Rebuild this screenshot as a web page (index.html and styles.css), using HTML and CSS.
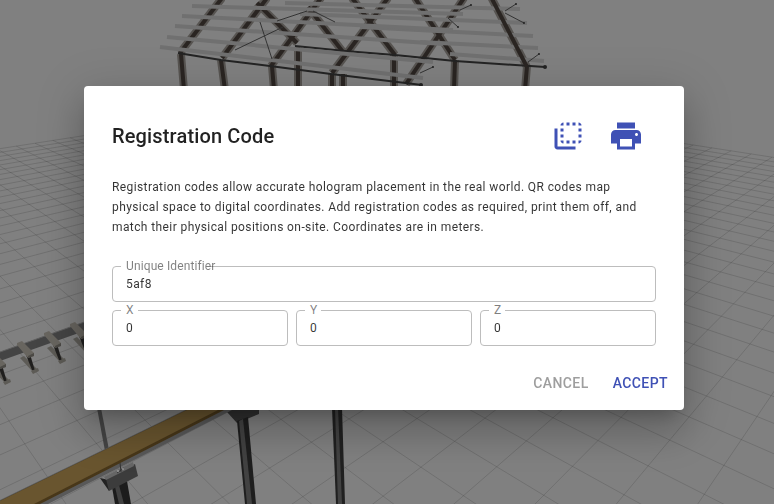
FILE: index.html
```html
<!DOCTYPE html>
<html lang="en">
<head>
<meta charset="utf-8">
<title>Registration Code</title>
<link rel="stylesheet" href="styles.css">
</head>
<body>
<svg class="scene" viewBox="0 0 774 504" preserveAspectRatio="xMidYMid slice" aria-hidden="true">
  <path class="grid" id="grid" d=""/>

  <!-- roof frame -->
  <g class="steel-edge">
    <path d="M181 54L184 90M221 60L225 90M272 66L274 90M298 47V90M332 74V90M343 74V90M394 55V90M455 60L454 90M527 66L525 90"/>
    <path d="M257 3L297 43M308 7L343 52M352 -2L395 55M415 -2L455 60M491 -3L527 67"/>
    <path d="M180 53L222 -2M222 58L267 -2M271 66L321 -2M332 73L388 -2M406 84L464 -2"/>
  </g>
  <g class="steel">
    <path d="M181 54L184 90M221 60L225 90M272 66L274 90M298 47V90M332 74V90M343 74V90M394 55V90M455 60L454 90M527 66L525 90"/>
    <path d="M257 3L297 43M308 7L343 52M352 -2L395 55M415 -2L455 60"/>
    <path d="M180 53L222 -2M222 58L267 -2M271 66L321 -2M332 73L388 -2M406 84L464 -2"/>
  </g>
  <path class="eave" d="M178 53L221 60L270 66L331 74L422 85M295 46L345 51L395 55L455 61L545 67"/>
  <g class="purlin">
    <path d="M285 3L520 9M300 14L527 23M360 27L533 36M420 42L538 48M450 54L544 61"/>
    <path d="M192 6L463 14M182 16L453 30M175 26L443 44M167 37L433 62M160 47L423 78"/>
  </g>
  <path class="steel" d="M491 -3L527 67"/>
  <path class="strut" d="M235 50L283 27M260 22L272 59M277 21L307 11M313 11L335 22M460 10L471 5M448 18L458 27M505 11L516 4M505 13L524 23M528 62L539 54M420 73L433 67"/>
  <g class="knob">
    <circle cx="471" cy="5" r="1"/><circle cx="458" cy="27" r="1"/><circle cx="516" cy="4" r="1"/><circle cx="524" cy="23" r="1"/>
    <circle cx="539" cy="54" r="1"/><circle cx="433" cy="67" r="1"/><circle cx="545" cy="67" r="2"/><circle cx="421" cy="85" r="2"/>
  </g>

  <!-- side rail with brackets -->
  <path fill="#444" d="M0 352L90 320V329L0 361z"/>
  <path class="rail-edge" d="M0 352L90 320"/>
  <defs>
    <g id="bracket">
      <path fill="#5d5b56" d="M20 358L24 356L38 370L34 373z"/>
      <path fill="#201f1e" d="M26 355L30 354L35 371L32 370z"/>
      <path fill="#5d5b56" d="M31 371L38 368L39 371L33 374z"/>
      <path fill="#68655f" d="M17 343L22 341L34 353L34 356L28 358L17 345z"/>
      <path fill="#4b4945" d="M28 356L34 353V356L28 358z"/>
    </g>
  </defs>
  <use href="#bracket" x="-28" y="11"/>
  <use href="#bracket"/>
  <use href="#bracket" x="27" y="-10"/>
  <use href="#bracket" x="53" y="-19"/>

  <!-- timber beam and its supports -->
  <path fill="#454545" d="M97 408H101L109 450L105 451z"/>
  <path fill="#303030" d="M227 412L234 408L259 408V414L237 423z"/>
  <path fill="#1e1e1e" d="M237 421L248 417L256 504H245z"/>
  <path fill="#424242" d="M239 421L243 419L252 504H247z"/>
  <path fill="#202020" d="M332 408H342L345 504H336z"/>
  <path fill="#424242" d="M335 408H338L342 504H338z"/>
  <path fill="#1c1c1c" d="M112 487L127 481L131 504H115z"/>
  <path fill="#414141" d="M115 487L119 485L124 504H119z"/>
  <path fill="#595959" d="M0 500L187 409L234 409L48 504H0z"/>
  <path fill="#483719" d="M0 501L189 409L226 409L40 504H0z"/>
  <path fill="#69552f" d="M0 501L189 409L220 409L34 504H0z"/>
  <path fill="#222" d="M100 478L109 480V491z"/>
  <path fill="#3c3c3c" d="M106 479L135 464L138 476L109 491z"/>
  <path fill="#666" d="M104 477L133 462L134 466L106 480z"/>
  <path class="strut" d="M120 463L121 472M117 473L124 468"/>
  <circle cx="118" cy="471" r="1" fill="#999"/><circle cx="123" cy="469" r="1" fill="#999"/>
</svg>

<main class="backdrop">
  <form class="dialog" role="dialog" aria-labelledby="dialog-title" aria-describedby="dialog-text">
    <header class="dialog-header">
      <h1 class="dialog-title" id="dialog-title">Registration Code</h1>
      <div class="tools">
        <button class="tool" type="button" aria-label="Copy">
          <svg viewBox="0 0 24 24"><path d="M9 7H7v2h2V7zm0 4H7v2h2v-2zm0-8c-1.110 0-2 .9-2 2h2V3zm4 12h-2v2h2v-2zm6-12v2h2c0-1.100-.9-2-2-2zm-6 0h-2v2h2V3zM9 17v-2H7c0 1.100.89 2 2 2zm10-4h2v-2h-2v2zm0-4h2V7h-2v2zm0 8c1.100 0 2-.9 2-2h-2v2zM5 7H3v12c0 1.100.89 2 2 2h12v-2H5V7zm10-2h2V3h-2v2zm0 12h2v-2h-2v2z"/></svg>
        </button>
        <button class="tool" type="button" aria-label="Print">
          <svg viewBox="0 0 24 24"><path d="M19 8H5c-1.660 0-3 1.340-3 3v6h4v4h12v-4h4v-6c0-1.660-1.340-3-3-3zm-3 11H8v-5h8v5zm3-7c-.55 0-1-.45-1-1s.45-1 1-1 1 .45 1 1-.45 1-1 1zm-1-9H6v4h12V3z"/></svg>
        </button>
      </div>
    </header>
    <p class="dialog-text" id="dialog-text">Registration codes allow accurate hologram placement in the real world. QR codes map physical space to digital coordinates. Add registration codes as required, print them off, and match their physical positions on-site. Coordinates are in meters.</p>
    <div class="fields">
      <div class="field field-wide">
        <input class="field-input" id="uid" type="text" value="5af8">
        <label class="field-label" for="uid">Unique Identifier</label>
      </div>
      <div class="field">
        <input class="field-input" id="x" type="text" value="0">
        <label class="field-label" for="x">X</label>
      </div>
      <div class="field">
        <input class="field-input" id="y" type="text" value="0">
        <label class="field-label" for="y">Y</label>
      </div>
      <div class="field">
        <input class="field-input" id="z" type="text" value="0">
        <label class="field-label" for="z">Z</label>
      </div>
    </div>
    <footer class="actions">
      <button class="action action-muted" type="button">Cancel</button>
      <button class="action" type="submit">Accept</button>
    </footer>
  </form>
</main>
<script src="grid.js"></script>
</body>
</html>
```
FILE: grid.js
```js
// Projects the ground grid: a and b index the two line families.
function project(a, b) {
  const d = b - a;
  const w = 1 - d / 19.6;
  const x = (349 + 68 * a + 14.5 * d) / w;
  const y = -6 + (424.9 - 0.4 * a) / w;
  return x.toFixed(1) + " " + y.toFixed(1);
}

const FAR_A = 30;
const FAR_B = -32;
const NEAR = 10;
let path = "";
for (let a = -10; a <= FAR_A; a++) {
  path += "M" + project(a, FAR_B) + "L" + project(a, a + NEAR);
}
for (let b = FAR_B; b <= 12; b++) {
  path += "M" + project(FAR_A, b) + "L" + project(b - NEAR, b);
}
document.getElementById("grid").setAttribute("d", path);
```
FILE: styles.css
```css
* {
  box-sizing: border-box;
}

body {
  margin: 0;
  background: #808080;
  color: rgba(0, 0, 0, 0.87);
  font-family: Roboto, "Liberation Sans", sans-serif;
}

/* Scene */
.scene {
  position: fixed;
  inset: 0;
  width: 100%;
  height: 100%;
}

.grid {
  fill: none;
  stroke: #000;
  stroke-opacity: 0.13;
}

.steel-edge,
.steel,
.eave,
.purlin,
.strut,
.rail-edge {
  fill: none;
}

.steel-edge {
  stroke: #575451;
  stroke-width: 8;
}

.steel {
  stroke: #2a2522;
  stroke-width: 4;
}

.eave {
  stroke: #242424;
  stroke-width: 2;
}

.purlin {
  stroke: #707070;
  stroke-width: 4;
}

.strut {
  stroke: #333;
}

.rail-edge {
  stroke: #5f5f5f;
}

.knob {
  fill: #222;
}

/* Dialog */
.backdrop {
  position: relative;
  display: flex;
  align-items: center;
  justify-content: center;
  min-height: 100vh;
  padding: 0 6px 8px 0;
}

.dialog {
  width: 100%;
  max-width: 600px;
  background: #fff;
  border-radius: 4px;
  box-shadow:
    0 11px 15px -7px rgba(0, 0, 0, 0.2),
    0 24px 38px 3px rgba(0, 0, 0, 0.14),
    0 9px 46px 8px rgba(0, 0, 0, 0.12);
}

.dialog-header {
  display: flex;
  align-items: center;
  justify-content: space-between;
  padding: 32px 40px 23px 28px;
}

.dialog-title {
  margin: 0;
  font-size: 20px;
  font-weight: 500;
  line-height: 36px;
  letter-spacing: 0.0075em;
}

.tools {
  display: flex;
  gap: 22px;
}

.tool {
  width: 36px;
  height: 36px;
  padding: 0;
  border: 0;
  background: none;
  color: #3f51b5;
}

.tool svg {
  display: block;
  width: 36px;
  height: 36px;
  fill: currentColor;
}

.dialog-text {
  margin: 0;
  padding: 0 28px;
  color: rgba(0, 0, 0, 0.8);
  font-size: 12px;
  line-height: 20px;
  letter-spacing: 0.0333em;
}

.fields {
  display: grid;
  grid-template-columns: repeat(3, 1fr);
  gap: 8px;
  padding: 29px 28px 0;
}

.field {
  position: relative;
}

.field-wide {
  grid-column: 1 / -1;
}

.field-input {
  display: block;
  width: 100%;
  height: 36px;
  padding: 0 13px;
  border: 1px solid #bdbdbd;
  border-radius: 4px;
  background: #fff;
  color: rgba(0, 0, 0, 0.8);
  font: 12px Roboto, "Liberation Sans", sans-serif;
  letter-spacing: 0.0333em;
}

.field-label {
  position: absolute;
  top: -7px;
  left: 9px;
  padding: 0 4px 0 5px;
  background: #fff;
  color: rgba(0, 0, 0, 0.5);
  font-size: 12px;
  line-height: 14px;
  letter-spacing: 0.01em;
}

.field-wide .field-label {
  background: linear-gradient(#fff, #fff) no-repeat;
  background-size: calc(100% - 10px) 100%;
}

.actions {
  display: flex;
  justify-content: flex-end;
  gap: 8px;
  padding: 19px 8px 9px;
}

.action {
  height: 36px;
  padding: 0 8px;
  border: 0;
  background: none;
  color: #3f51b5;
  font: 500 14px Roboto, "Liberation Sans", sans-serif;
  letter-spacing: 0.03em;
  text-transform: uppercase;
}

.action-muted {
  color: #9e9e9e;
}
```
